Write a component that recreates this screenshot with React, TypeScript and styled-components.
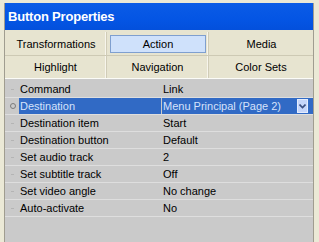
import React from 'react';
import styled, {createGlobalStyle} from 'styled-components';

const GlobalStyle = createGlobalStyle`
    html, body {
        margin: 0;
        padding: 0;
        background: #ebe9d6;
        font-family: 'Liberation Sans', Arial, sans-serif;
    }
`;

const Panel = styled.div`
    display: flex;
    flex-direction: column;
    width: 308px;
    height: 239px;
    margin: 3px 0 0 4px;
    border-left: 1px solid #a09d90;
    border-right: 1px solid #a09d90;
    background: #cacaca;
    overflow: hidden;
`;

const TitleBar = styled.div`
    display: flex;
    align-items: center;
    flex: 0 0 27px;
    padding-left: 3px;
    background: linear-gradient(#0b5ce6, #0455e4 60%, #0350dc);
    color: #fff;
    font-size: 13px;
    font-weight: bold;
    letter-spacing: -0.2px;
`;

const TabArea = styled.div`
    display: grid;
    grid-template-columns: 102px 102px 1fr;
    grid-template-rows: 24px 22px;
    padding-top: 2px;
    border-bottom: 1px solid #fbfbf7;
    background: #e7e4d0;
`;

const Tab = styled.div<{$last?: boolean; $bottom?: boolean}>`
    display: flex;
    align-items: center;
    justify-content: center;
    box-sizing: border-box;
    padding: ${p => (p.$bottom ? '0' : '3px 2px 2px 3px')};
    border-right: ${p => (p.$last ? 'none' : '1px solid #d0ccb7')};
    border-bottom: ${p => (p.$bottom ? 'none' : '1px solid #cdc9b4')};
    box-shadow: ${p => (p.$last ? 'none' : 'inset -1px 0 0 #f7f5ec')};
    font-size: 11px;
    color: #000;
`;

const TabLabel = styled.span<{$active?: boolean}>`
    display: flex;
    align-items: center;
    justify-content: center;
    width: 100%;
    height: 100%;
    box-sizing: border-box;
    background: ${p => (p.$active ? '#cfe1fb' : 'transparent')};
    border: 1px solid ${p => (p.$active ? '#7f9fcf' : 'transparent')};
`;

const PropertyList = styled.div`
    display: flex;
    flex-direction: column;
    padding-top: 2px;
    flex: 1;
`;

const Row = styled.div`
    display: grid;
    grid-template-columns: 14px 142px 1px 1fr;
    height: 16px;
    border-bottom: 1px solid #dedede;
    font-size: 11px;
    line-height: 16px;
`;

const Gutter = styled.div`
    display: flex;
    align-items: center;
    padding-left: 6px;
`;

const Dash = styled.span`
    width: 3px;
    height: 1px;
    background: #b4b4b4;
`;

const Circle = styled.span`
    width: 4px;
    height: 4px;
    border: 1px solid #7c7c7c;
    border-radius: 50%;
    margin-left: -1px;
`;

const Cell = styled.div<{$selected?: boolean}>`
    display: flex;
    align-items: center;
    padding-left: 1px;
    white-space: nowrap;
    overflow: hidden;
    background: ${p => (p.$selected ? '#316ac5' : 'transparent')};
    color: ${p => (p.$selected ? '#d6e2fb' : '#000')};
`;

const Divider = styled.div`
    background: #cacaca;
`;

const ValueText = styled.span`
    flex: 1;
`;

const DropButton = styled.span`
    display: flex;
    align-items: center;
    justify-content: center;
    width: 11px;
    height: 14px;
    margin-right: 5px;
    background: #c6d6fb;
    border: 1px solid #e4ecfd;
    box-sizing: border-box;
`;

const tabs = [
    ['Transformations', 'Action', 'Media'],
    ['Highlight', 'Navigation', 'Color Sets'],
];

const rows: [string, string][] = [
    ['Command', 'Link'],
    ['Destination', 'Menu Principal (Page 2)'],
    ['Destination item', 'Start'],
    ['Destination button', 'Default'],
    ['Set audio track', '2'],
    ['Set subtitle track', 'Off'],
    ['Set video angle', 'No change'],
    ['Auto-activate', 'No'],
];

export default function App() {
    return (
        <>
            <GlobalStyle/>
            <Panel>
                <TitleBar>{'Button Properties'}</TitleBar>
                <TabArea>
                    {tabs.map((line, r) => line.map((name, c) => (
                        <Tab
                            key={name}
                            $last={c === 2}
                            $bottom={r === 1}
                        >
                            <TabLabel $active={name === 'Action'}>{name}</TabLabel>
                        </Tab>
                    )))}
                </TabArea>
                <PropertyList>
                    {rows.map(([label, value]) => {
                        const selected = label === 'Destination';
                        return (
                            <Row key={label}>
                                <Gutter>{selected ? <Circle/> : <Dash/>}</Gutter>
                                <Cell $selected={selected}>{label}</Cell>
                                <Divider/>
                                <Cell $selected={selected}>
                                    <ValueText>{value}</ValueText>
                                    {selected && (
                                        <DropButton>
                                            <svg
                                                width='7'
                                                height='5'
                                                viewBox='0 0 7 5'
                                            >
                                                <path
                                                    d='M0.5 0.5 L3.5 3.5 L6.5 0.5'
                                                    fill='none'
                                                    stroke='#3b4f82'
                                                    strokeWidth='1.6'
                                                />
                                            </svg>
                                        </DropButton>
                                    )}
                                </Cell>
                            </Row>
                        );
                    })}
                </PropertyList>
            </Panel>
        </>
    );
}
